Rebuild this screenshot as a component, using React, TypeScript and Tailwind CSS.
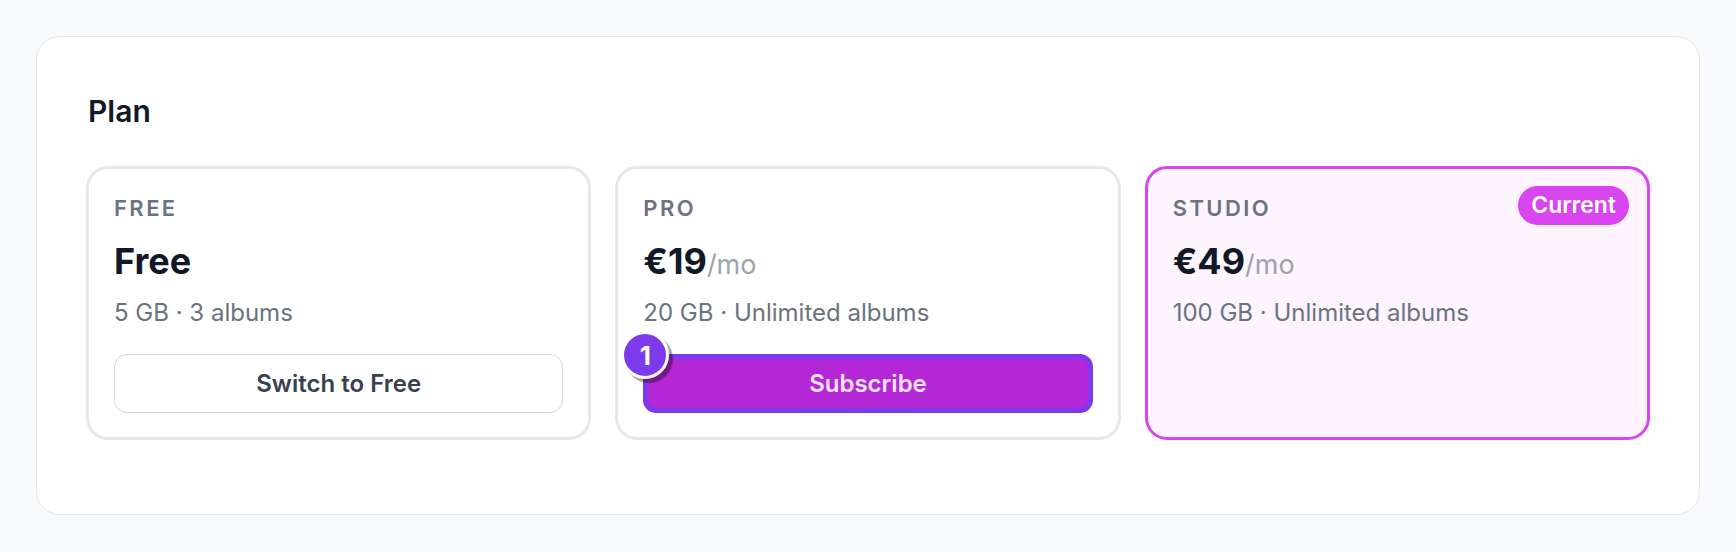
import React from "react";

type Plan = {
  id: string;
  label: string;
  price: string;
  period?: string;
  details: string;
  action?: "switch" | "subscribe";
  current?: boolean;
};

const plans: Plan[] = [
  { id: "free", label: "Free", price: "Free", details: "5 GB · 3 albums", action: "switch" },
  { id: "pro", label: "Pro", price: "€19", period: "/mo", details: "20 GB · Unlimited albums", action: "subscribe" },
  { id: "studio", label: "Studio", price: "€49", period: "/mo", details: "100 GB · Unlimited albums", current: true },
];

const PlanCard = ({ plan }: { plan: Plan }) => {
  return (
    <div
      className={
        plan.current
          ? "relative flex flex-col rounded-[22px] border-[3px] border-[#d946ef] bg-[#fdf4ff] px-[25px] pt-6 pb-6"
          : "relative flex flex-col rounded-[22px] border-[3px] border-[#e5e7eb] bg-white px-[25px] pt-6 pb-6"
      }
    >
      {plan.current && (
        <span className="absolute top-[17px] right-[18px] rounded-full bg-[#d946ef] px-[13px] py-[5px] text-[23px] leading-[29px] font-semibold text-white">
          Current
        </span>
      )}
      <div className="text-[22px] leading-[30px] font-semibold uppercase tracking-[0.11em] text-[#6b7280]">
        {plan.label}
      </div>
      <div className="mt-[14px] h-[48px] text-[36px] leading-[48px] font-bold text-[#111827]">
        {plan.price}
        {plan.period && (
          <span className="text-[27px] leading-none font-normal text-[#9ca3af]">{plan.period}</span>
        )}
      </div>
      <div className="mt-[10px] text-[24px] leading-[36px] text-[#6b7280]">{plan.details}</div>

      {plan.action === "switch" && (
        <button className="mt-[23px] h-[59px] w-full rounded-[13px] border-[1.5px] border-[#d1d5db] bg-white text-[24px] font-semibold text-[#374151]">
          Switch to Free
        </button>
      )}

      {plan.action === "subscribe" && (
        <div className="relative mt-[23px]">
          <button className="h-[59px] w-full rounded-[13px] border-[5px] border-[#7c3aed] bg-[#b327d6] text-[24px] font-semibold text-[#f5e1fb]">
            Subscribe
          </button>
          <span className="absolute -top-[23px] -left-[22px] flex h-[48px] w-[48px] items-center justify-center rounded-full border-[3px] border-white bg-[#7c3aed] text-[26px] font-bold text-white shadow-[4px_4px_1px_rgba(0,0,0,0.35)]">
            1
          </span>
        </div>
      )}
    </div>
  );
};

const App = () => {
  return (
    <div className="min-h-[552px] bg-[#f9fafb] p-9 font-['Inter','Noto_Sans',sans-serif]">
      <div className="rounded-[24px] border border-[#e5e7eb] bg-white px-[49px] pt-[53px] pb-[74px]">
        <h2 className="pl-[2px] text-[30px] leading-[42px] font-semibold text-[#111827]">Plan</h2>
        <div className="mt-[34px] grid grid-cols-3 gap-6">
          {plans.map((plan) => (
            <PlanCard key={plan.id} plan={plan} />
          ))}
        </div>
      </div>
    </div>
  );
};

export default App;
